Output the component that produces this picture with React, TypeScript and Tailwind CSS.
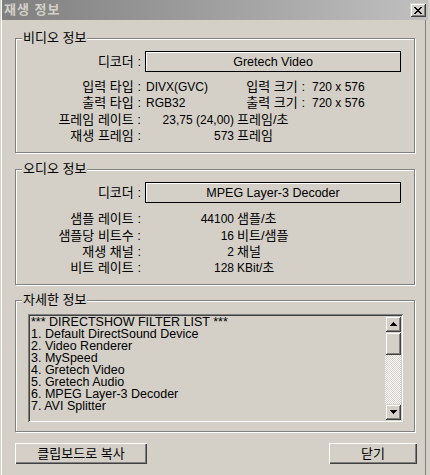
import React from "react";

const raised =
  "shadow-[inset_1px_1px_#fff,inset_-1px_-1px_#404040,inset_-2px_-2px_#808080]";
const raisedEdge =
  "shadow-[inset_1px_1px_#d4d0c8,inset_-1px_-1px_#404040,inset_2px_2px_#fff,inset_-2px_-2px_#808080]";

function K({ children }: { children: React.ReactNode }) {
  return <span className="text-[13px]">{children}</span>;
}

function Group({
  title,
  className,
  children,
}: {
  title: string;
  className: string;
  children: React.ReactNode;
}) {
  return (
    <div
      className={
        "relative w-[400px] border border-[#808080] shadow-[1px_1px_0_#fff,inset_1px_1px_0_#fff] " +
        className
      }
    >
      <span className="absolute left-[6px] -top-[8px] px-[1px] bg-[#d4d0c8] leading-[14px] h-[14px] text-[13px]">
        {title}
      </span>
      {children}
    </div>
  );
}

function DecoderRow({ value }: { value: string }) {
  return (
    <div className="flex items-center h-[21px] mt-[12px]">
      <span className="w-[125px] text-right leading-[14px] text-[13px]">디코더 :</span>
      <div className="ml-[4px] w-[256px] h-[21px] border border-black shadow-[inset_1px_1px_#fff] flex items-center justify-center leading-[14px] text-[12.5px]">
        {value}
      </div>
    </div>
  );
}

function NumRow({
  label,
  num,
  unit,
  h,
}: {
  label: string;
  num: string;
  unit: React.ReactNode;
  h: string;
}) {
  return (
    <div className={"flex items-center whitespace-nowrap leading-[14px] " + h}>
      <span className="w-[125px] text-right text-[13px]">{label}</span>
      <span className="w-[93px] text-right">{num}</span>
      <span className="ml-[3px]">{unit}</span>
    </div>
  );
}

function PairRow({
  l1,
  v1,
  l2,
  v2,
  h,
}: {
  l1: string;
  v1: string;
  l2: string;
  v2: string;
  h: string;
}) {
  return (
    <div className={"flex items-center whitespace-nowrap leading-[14px] " + h}>
      <span className="w-[125px] text-right text-[13px]">{l1}</span>
      <span className="w-[100px] pl-[5px]">{v1}</span>
      <span className="w-[64px] text-right text-[13px]">{l2}</span>
      <span className="pl-[7px]">{v2}</span>
    </div>
  );
}

function Arrow({ up }: { up: boolean }) {
  return (
    <svg width="7" height="4" viewBox="0 0 7 4" shapeRendering="crispEdges">
      {up ? (
        <path d="M3 0h1v1h1v1h1v1h1v1H0V3h1V2h1V1h1z" fill="#000" />
      ) : (
        <path d="M0 0h7v1H6v1H5v1H4v1H3V3H2V2H1V1H0z" fill="#000" />
      )}
    </svg>
  );
}

export default function App() {
  const lines = [
    "*** DIRECTSHOW FILTER LIST ***",
    "1. Default DirectSound Device",
    "2. Video Renderer",
    "3. MySpeed",
    "4. Gretech Video",
    "5. Gretech Audio",
    "6. MPEG Layer-3 Decoder",
    "7. AVI Splitter",
  ];
  return (
    <div className="w-[430px] h-[475px] overflow-hidden bg-[#d4d0c8] text-black text-[12px] [font-family:'Liberation_Sans','Noto_Sans_CJK_KR',sans-serif] shadow-[inset_1px_0_#d4d0c8,inset_2px_0_#fff,inset_-4px_0_#d4d0c8,inset_-5px_0_#808080]">
      {/* Title bar */}
      <div className="ml-[2px] w-[426px] h-[20px] flex items-center bg-gradient-to-r from-[#808080] to-[#c0c0c0] pl-[2px] pr-[2px]">
        <span className="font-bold text-[13px] tracking-[1px] text-[#d4d0c8] leading-[14px]">
          재생 정보
        </span>
        <div
          className={
            "ml-auto w-[16px] h-[14px] bg-[#d4d0c8] flex items-center justify-center " +
            raisedEdge
          }
        >
          <svg width="8" height="7" viewBox="0 0 8 7" shapeRendering="crispEdges">
            <path
              d="M0 0h2v1H0zM6 0h2v1H6zM1 1h2v1H1zM5 1h2v1H5zM2 2h4v1H2zM3 3h2v1H3zM2 4h4v1H2zM1 5h2v1H1zM5 5h2v1H5zM0 6h2v1H0zM6 6h2v1H6z"
              fill="#000"
            />
          </svg>
        </div>
      </div>

      <div className="pl-[15px] pt-[18px] flex flex-col">
        {/* Video */}
        <Group title="비디오 정보" className="h-[115px]">
          <DecoderRow value="Gretech Video" />
          <div className="mt-[6px]">
            <PairRow l1="입력 타입 :" v1="DIVX(GVC)" l2="입력 크기 :" v2="720 x 576" h="h-[17px]" />
            <PairRow l1="출력 타입 :" v1="RGB32" l2="출력 크기 :" v2="720 x 576" h="h-[16px]" />
            <NumRow label="프레임 레이트 :" num="23,75 (24,00)" unit={<K>프레임/초</K>} h="h-[17px]" />
            <NumRow label="재생 프레임 :" num="573" unit={<K>프레임</K>} h="h-[16px]" />
          </div>
        </Group>

        {/* Audio */}
        <Group title="오디오 정보" className="h-[116px] mt-[16px]">
          <DecoderRow value="MPEG Layer-3 Decoder" />
          <div className="mt-[7px]">
            <NumRow label="샘플 레이트 :" num="44100" unit={<K>샘플/초</K>} h="h-[17px]" />
            <NumRow label="샘플당 비트수 :" num="16" unit={<K>비트/샘플</K>} h="h-[17px]" />
            <NumRow label="재생 채널 :" num="2" unit={<K>채널</K>} h="h-[16px]" />
            <NumRow label="비트 레이트 :" num="128" unit={<>KBit/<K>초</K></>} h="h-[16px]" />
          </div>
        </Group>

        {/* Details */}
        <Group title="자세한 정보" className="h-[132px] mt-[15px]">
          <div className="ml-[12px] mt-[13px] w-[375px] h-[108px] p-[2px] flex shadow-[inset_1px_1px_#808080,inset_-1px_-1px_#fff,inset_2px_2px_#404040,inset_-2px_-2px_#d4d0c8]">
            <div className="flex-1 pl-[1px] overflow-hidden text-[12.5px]">
              {lines.map((l) => (
                <div key={l} className="h-[12px] leading-[12px] whitespace-pre">
                  {l}
                </div>
              ))}
            </div>
            <div className="w-[16px] h-[104px] flex flex-col">
              <div className={"h-[16px] flex items-center justify-center bg-[#d4d0c8] " + raisedEdge}>
                <Arrow up />
              </div>
              <div className={"h-[23px] bg-[#d4d0c8] " + raisedEdge} />
              <div className="flex-1 [background:repeating-conic-gradient(#fff_0_25%,#d4d0c8_0_50%)_0_0/2px_2px]" />
              <div className={"h-[16px] flex items-center justify-center bg-[#d4d0c8] " + raisedEdge}>
                <Arrow up={false} />
              </div>
            </div>
          </div>
        </Group>

        {/* Buttons */}
        <div className="mt-[11px] w-[402px] flex justify-between">
          <div className={"w-[132px] h-[21px] flex items-center justify-center leading-[14px] text-[13px] " + raised}>
            클립보드로 복사
          </div>
          <div className={"w-[88px] h-[21px] flex items-center justify-center leading-[14px] text-[13px] " + raised}>
            닫기
          </div>
        </div>
      </div>
    </div>
  );
}
